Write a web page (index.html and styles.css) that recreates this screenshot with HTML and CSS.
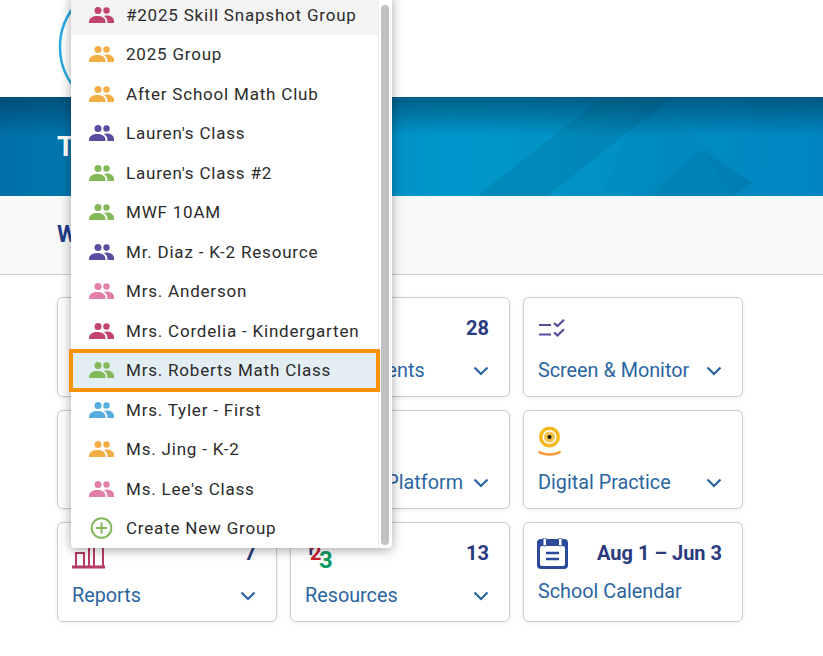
FILE: index.html
```html
<!DOCTYPE html>
<html lang="en">
<head>
    <meta charset="UTF-8">
    <meta name="viewport" content="width=device-width, initial-scale=1.0">
    <title>Teacher Dashboard</title>
    <link rel="stylesheet" href="styles.css">
</head>
<body>
    <svg class="defs" width="0" height="0">
        <symbol id="people" viewBox="0 0 25 16">
            <circle cx="9" cy="3.500" r="3.500"/>
            <circle cx="17.500" cy="3.500" r="3.200"/>
            <path d="M0 16v-1.200C0 11 4 9 8.300 9s8.200 2 8.200 5.800V16z"/>
            <path d="M14.800 9c1-.3 1.900-.5 2.800-.5 4 0 7.400 2 7.400 5.400V16h-6.600v-1.600c0-2.200-1.300-4-3.600-5.400z"/>
        </symbol>
        <symbol id="chevron" viewBox="0 0 16 10">
            <path d="M1.500 1.500 8 8l6.500-6.500" fill="none" stroke="currentColor" stroke-width="2.200"/>
        </symbol>
    </svg>

    <header class="top">
        <svg class="logo" width="80" height="97"><circle cx="124" cy="47" r="64" fill="none" stroke="#29abe2" stroke-width="2.500"/></svg>
    </header>

    <section class="banner">
        <svg class="banner-art" viewBox="0 0 823 99" preserveAspectRatio="none">
            <polygon points="603,0 673,0 547,99 477,99" fill="#004a60" opacity="0.14"/>
            <polygon points="645,0 768,99 733,99 700,53 647,99 600,99" fill="#004a60" opacity="0.04"/>
            <polygon points="647,99 700,53 752,85 733,99" fill="#004a60" opacity="0.12"/>
            <polygon points="733,99 823,36 823,99" fill="#0088c8" opacity="0.3"/>
        </svg>
        <h1>Teacher</h1>
    </section>

    <section class="subhead">
        <h2>Welcome</h2>
    </section>

    <main class="cards">
        <div class="card"></div>
        <div class="card">
            <div class="card-top"><span></span><span class="num">28</span></div>
            <div class="card-bottom"><span>Assessments</span><svg class="chev"><use href="#chevron"/></svg></div>
        </div>
        <div class="card">
            <div class="card-top">
                <svg class="ico ico-screen" width="28" height="19" viewBox="0 0 28 19" fill="none" stroke="#5b4a9b" stroke-width="2.200">
                    <path d="M1 6h12M1 15.500h12"/>
                    <path d="M16 4l3.500 3L26 .8M16 13.500l3.500 3L26 10.300"/>
                </svg>
            </div>
            <div class="card-bottom"><span>Screen &amp; Monitor</span><svg class="chev"><use href="#chevron"/></svg></div>
        </div>

        <div class="card"></div>
        <div class="card">
            <div class="card-top"></div>
            <div class="card-bottom"><span>Learning Platform</span><svg class="chev"><use href="#chevron"/></svg></div>
        </div>
        <div class="card">
            <div class="card-top">
                <svg class="ico ico-practice" width="26" height="31" viewBox="0 0 26 31">
                    <circle cx="12.500" cy="11" r="10.500" fill="#f5b81f"/>
                    <circle cx="12.500" cy="11" r="7" fill="#fff"/>
                    <circle cx="12.500" cy="11" r="5.500" fill="#f3c04a"/>
                    <circle cx="12.500" cy="11" r="2" fill="#111"/>
                    <path d="M1.500 25.500c6 4 16 4 22 0" fill="none" stroke="#f79a3a" stroke-width="2.500"/>
                </svg>
            </div>
            <div class="card-bottom"><span>Digital Practice</span><svg class="chev"><use href="#chevron"/></svg></div>
        </div>

        <div class="card">
            <div class="card-top">
                <svg class="ico" width="34" height="32" viewBox="0 0 34 32" fill="none" stroke="#b83a66" stroke-width="2">
                    <path d="M4 29V15h8v14M22 29V7h9v22M17 29V7"/>
                    <path d="M0 29h33" stroke-width="3"/>
                </svg>
                <span class="num">7</span>
            </div>
            <div class="card-bottom"><span>Reports</span><svg class="chev"><use href="#chevron"/></svg></div>
        </div>
        <div class="card">
            <div class="card-top">
                <svg class="ico" width="34" height="32" viewBox="0 0 34 32" font-family="Roboto" font-weight="700">
                    <text x="0" y="17" font-size="18" fill="#2a3a7c">1</text>
                    <text x="5" y="22" font-size="20" fill="#c8202f">2</text>
                    <text x="14" y="30" font-size="24" fill="#0e9b63">3</text>
                </svg>
                <span class="num">13</span>
            </div>
            <div class="card-bottom"><span>Resources</span><svg class="chev"><use href="#chevron"/></svg></div>
        </div>
        <div class="card card-cal">
            <div class="card-top">
                <svg class="ico ico-cal" width="31" height="31" viewBox="0 0 31 31">
                    <rect x="0" y="1" width="31" height="30" rx="4" fill="#2b4a9b"/>
                    <rect x="3" y="8" width="25" height="20" rx="2" fill="#fff"/>
                    <rect x="6" y="0" width="3.500" height="8" rx="1.500" fill="#fff" stroke="#2b4a9b"/>
                    <rect x="21.500" y="0" width="3.500" height="8" rx="1.500" fill="#fff" stroke="#2b4a9b"/>
                    <path d="M9 15h13M9 21h13" stroke="#2b4a9b" stroke-width="2.400"/>
                </svg>
                <span class="num">Aug 1 – Jun 3</span>
            </div>
            <div class="card-bottom"><span>School Calendar</span></div>
        </div>
    </main>

    <div class="menu">
        <ul class="menu-list">
            <li class="hovered"><svg class="group c-rose"><use href="#people"/></svg>#2025 Skill Snapshot Group</li>
            <li><svg class="group c-orange"><use href="#people"/></svg>2025 Group</li>
            <li><svg class="group c-orange"><use href="#people"/></svg>After School Math Club</li>
            <li><svg class="group c-purple"><use href="#people"/></svg>Lauren's Class</li>
            <li><svg class="group c-green"><use href="#people"/></svg>Lauren's Class #2</li>
            <li><svg class="group c-green"><use href="#people"/></svg>MWF 10AM</li>
            <li><svg class="group c-purple"><use href="#people"/></svg>Mr. Diaz - K-2 Resource</li>
            <li><svg class="group c-pink"><use href="#people"/></svg>Mrs. Anderson</li>
            <li><svg class="group c-rose"><use href="#people"/></svg>Mrs. Cordelia - Kindergarten</li>
            <li class="selected"><svg class="group c-green"><use href="#people"/></svg>Mrs. Roberts Math Class</li>
            <li><svg class="group c-blue"><use href="#people"/></svg>Mrs. Tyler - First</li>
            <li><svg class="group c-orange"><use href="#people"/></svg>Ms. Jing - K-2</li>
            <li><svg class="group c-pink"><use href="#people"/></svg>Ms. Lee's Class</li>
            <li>
                <svg class="group add" viewBox="0 0 25 22" fill="none" stroke="#84b95a" stroke-width="2">
                    <circle cx="12.500" cy="11" r="9.800"/>
                    <path d="M12.500 5.500v11M7 11h11"/>
                </svg>
                Create New Group
            </li>
        </ul>
        <div class="scroll-track"><div class="scroll-thumb"></div></div>
    </div>
</body>
</html>
```

FILE: styles.css
```css
* {
    box-sizing: border-box;
}
html, body {
    height: 100%;
}
body {
    margin: 0;
    font-family: Roboto, "Liberation Sans", sans-serif;
    background-color: white;
    overflow: hidden;
}
.defs {
    position: absolute;
}
.top {
    height: 97px;
    overflow: hidden;
}
.logo {
    display: block;
}
.banner {
    height: 99px;
    padding: 33px 57px 0;
    position: relative;
    background:
        linear-gradient(to bottom, rgba(0,50,80,0.55), rgba(0,60,90,0) 40%),
        linear-gradient(to right, #0070a8, #0098cc 55%, #0090c4 75%, #0085c0);
}
.banner-art {
    position: absolute;
    top: 0;
    left: 0;
    width: 100%;
    height: 100%;
}
.banner h1 {
    position: relative;
    margin: 0;
    color: white;
    font-size: 28px;
    line-height: 34px;
    font-weight: 700;
}
.subhead {
    height: 79px;
    padding: 25px 57px 0;
    background-color: #f8faf9;
    border-bottom: 1px solid #cfcfcf;
}
.subhead h2 {
    margin: 0;
    color: #1f3c88;
    font-size: 23px;
    line-height: 28px;
    font-weight: 700;
}
.cards {
    display: grid;
    grid-template-columns: repeat(3, 220px);
    grid-auto-rows: 99.5px;
    gap: 13px;
    padding: 22px 0 0 57px;
}
.card {
    display: flex;
    flex-direction: column;
    justify-content: space-between;
    padding: 15px 20px 14px 14px;
    background-color: white;
    border: 1px solid #cccccc;
    border-radius: 6px;
    box-shadow: 0 1px 5px rgba(0,0,0,0.07);
}
.card-top {
    display: flex;
    justify-content: space-between;
    align-items: flex-start;
    height: 32px;
}
.card-bottom {
    display: flex;
    justify-content: space-between;
    align-items: center;
    color: #2a659f;
    font-size: 19.800px;
    line-height: 22px;
}
.card-cal {
    padding-bottom: 18px;
}
.ico {
    display: block;
}
.ico-screen {
    margin-top: 6px;
}
.ico-practice, .ico-cal {
    margin-left: -1px;
}
.num {
    color: #2a3a7c;
    font-size: 20px;
    line-height: 30px;
    font-weight: 700;
}
.chev {
    width: 16px;
    height: 10px;
    color: #2a659f;
}
.menu {
    position: absolute;
    top: -5px;
    left: 71px;
    width: 321px;
    display: flex;
    background-color: white;
    border-radius: 0 0 4px 4px;
    box-shadow: 0 2px 12px rgba(0,0,0,0.35);
}
.menu-list {
    flex: 1;
    margin: 0;
    padding: 0;
    list-style: none;
}
.menu-list li {
    display: flex;
    align-items: center;
    height: 39.5px;
    padding-left: 18px;
    color: #2b2b2b;
    font-size: 17px;
    letter-spacing: 0.8px;
}
.menu-list .hovered {
    background-color: #f4f4f4;
}
.menu-list .selected {
    background-color: #e3eef3;
    outline: 4px solid #fb9209;
    outline-offset: -2px;
    position: relative;
}
.group {
    flex: none;
    width: 25px;
    height: 16px;
    margin-right: 12px;
}
.group.add {
    height: 22px;
}
.c-rose { fill: #c2456f; }
.c-orange { fill: #f3ad45; }
.c-purple { fill: #5c4b9f; }
.c-green { fill: #84b95a; }
.c-pink { fill: #e27fa9; }
.c-blue { fill: #56aee0; }
.scroll-track {
    flex: none;
    width: 14px;
    padding: 10px 3px 3px 2px;
    border-left: 1px solid #ececec;
}
.scroll-thumb {
    height: 100%;
    background-color: #c1c1c1;
    border-radius: 5px;
}
```
